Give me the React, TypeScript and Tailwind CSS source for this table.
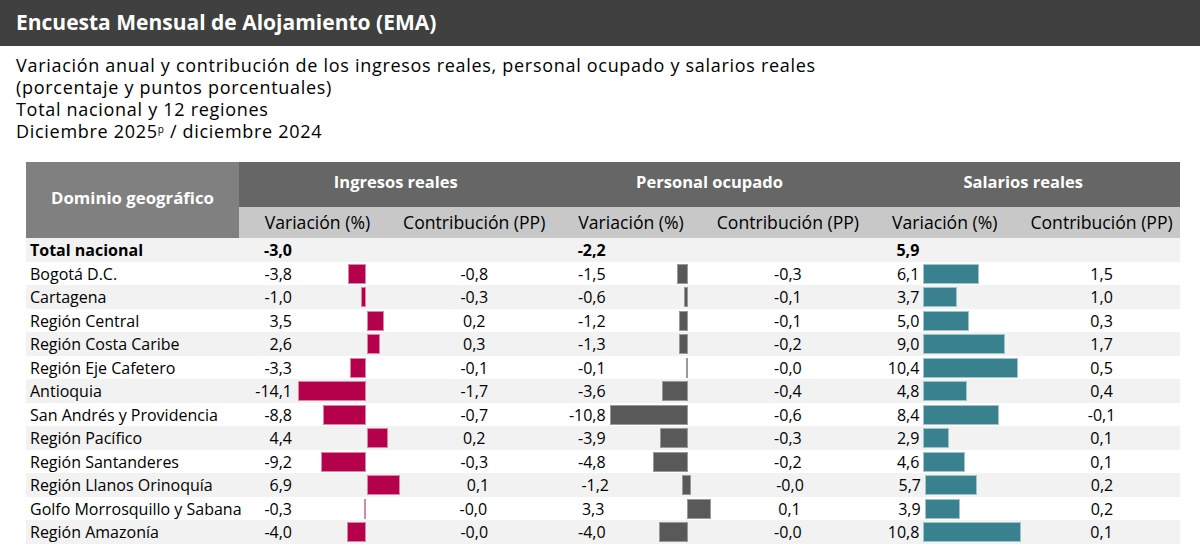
import React from 'react';

type Row = [string, string, string, string, string, string, string];

const rows: Row[] = [
  ['Bogotá D.C.', '-3,8', '-0,8', '-1,5', '-0,3', '6,1', '1,5'],
  ['Cartagena', '-1,0', '-0,3', '-0,6', '-0,1', '3,7', '1,0'],
  ['Región Central', '3,5', '0,2', '-1,2', '-0,1', '5,0', '0,3'],
  ['Región Costa Caribe', '2,6', '0,3', '-1,3', '-0,2', '9,0', '1,7'],
  ['Región Eje Cafetero', '-3,3', '-0,1', '-0,1', '-0,0', '10,4', '0,5'],
  ['Antioquia', '-14,1', '-1,7', '-3,6', '-0,4', '4,8', '0,4'],
  ['San Andrés y Providencia', '-8,8', '-0,7', '-10,8', '-0,6', '8,4', '-0,1'],
  ['Región Pacífico', '4,4', '0,2', '-3,9', '-0,3', '2,9', '0,1'],
  ['Región Santanderes', '-9,2', '-0,3', '-4,8', '-0,2', '4,6', '0,1'],
  ['Región Llanos Orinoquía', '6,9', '0,1', '-1,2', '-0,0', '5,7', '0,2'],
  ['Golfo Morrosquillo y Sabana', '-0,3', '-0,0', '3,3', '0,1', '3,9', '0,2'],
  ['Región Amazonía', '-4,0', '-0,0', '-4,0', '-0,0', '10,8', '0,1'],
];

const num = (s: string) => parseFloat(s.replace(',', '.'));

// one variation cell: number, then the bar split at the zero axis
function VarCell({
  value,
  scale,
  negWidth,
  barClass,
  bold,
  showBar = true,
}: {
  value: string;
  scale: number;
  negWidth: number;
  barClass: string;
  bold?: boolean;
  showBar?: boolean;
}) {
  const v = num(value);
  const w = Math.max(1, Math.round(Math.abs(v) * scale));
  return (
    <div className="flex items-center h-full">
      <span className={`w-[53px] shrink-0 text-right ${bold ? 'font-bold' : ''}`}>{value}</span>
      <div className="shrink-0 flex justify-end items-center h-full" style={{ width: negWidth }}>
        {showBar && v < 0 && <div className={`h-[20px] ${barClass}`} style={{ width: w }} />}
      </div>
      <div className="flex-1 flex items-center h-full pl-[1px]">
        {showBar && v >= 0 && <div className={`h-[20px] shrink-0 ${barClass}`} style={{ width: w }} />}
      </div>
    </div>
  );
}

const ING = 'bg-[#b5004b] border border-[#d986a8]';
const PER = 'bg-[#595959] border border-[#9a9a9a]';
const SAL = 'bg-[#3a818f] border border-[#9ec4cc]';

export default function App() {
  return (
    <div
      className="w-[1200px] h-[559px] bg-white text-black overflow-hidden"
      style={{ fontFamily: '"Open Sans", "Noto Sans", sans-serif' }}
    >
      <div className="h-[46px] bg-[#404040] flex items-center px-4 text-white font-bold text-[21px]">
        Encuesta Mensual de Alojamiento (EMA)
      </div>

      <div className="pt-[8px] pl-4 text-[18px] tracking-[0.7px] leading-[22px]">
        <div>Variación anual y contribución de los ingresos reales, personal ocupado y salarios reales</div>
        <div>(porcentaje y puntos porcentuales)</div>
        <div>Total nacional y 12 regiones</div>
        <div>
          Diciembre 2025<sup className="text-[10px] leading-none">p</sup> / diciembre 2024
        </div>
      </div>

      <div className="ml-[26px] mt-[20px] w-[1154px] text-[16px]">
        {/* cabecera */}
        <div className="grid grid-cols-[213px_repeat(6,1fr)] grid-rows-[45px_31px]">
          <div className="row-span-2 bg-[#808080] text-white font-bold text-[16.8px] flex items-center justify-center pb-[4px]">
            Dominio geográfico
          </div>
          <div className="col-span-2 bg-[#666666] text-white font-bold text-[16.5px] flex items-center justify-center pb-[4px]">
            Ingresos reales
          </div>
          <div className="col-span-2 bg-[#666666] text-white font-bold text-[16.5px] flex items-center justify-center pb-[4px]">
            Personal ocupado
          </div>
          <div className="col-span-2 bg-[#666666] text-white font-bold text-[16.5px] flex items-center justify-center pb-[4px]">
            Salarios reales
          </div>
          {['Variación (%)', 'Contribución (PP)', 'Variación (%)', 'Contribución (PP)', 'Variación (%)', 'Contribución (PP)'].map(
            (t, i) => (
              <div key={i} className="bg-[#c8c8c8] text-[17.6px] flex items-center justify-center">
                {t}
              </div>
            )
          )}
        </div>

        {/* total */}
        <div className="grid grid-cols-[213px_repeat(6,1fr)] h-[23.5px] bg-[#f2f2f2] font-bold items-center">
          <div className="pl-[4px]">Total nacional</div>
          <VarCell value="-3,0" scale={0} negWidth={74} barClass={ING} bold showBar={false} />
          <div />
          <VarCell value="-2,2" scale={0} negWidth={82} barClass={PER} bold showBar={false} />
          <div />
          <VarCell value="5,9" scale={0} negWidth={3} barClass={SAL} bold showBar={false} />
          <div />
        </div>

        {rows.map((r, i) => (
          <div
            key={r[0]}
            className={`grid grid-cols-[213px_repeat(6,1fr)] h-[23.5px] items-center ${
              i % 2 === 0 ? 'bg-white' : 'bg-[#f2f2f2]'
            }`}
          >
            <div className="pl-[4px] whitespace-nowrap">{r[0]}</div>
            <VarCell value={r[1]} scale={4.85} negWidth={74} barClass={ING} />
            <div className="text-center">{r[2]}</div>
            <VarCell value={r[3]} scale={7.2} negWidth={82} barClass={PER} />
            <div className="text-center">{r[4]}</div>
            <VarCell value={r[5]} scale={9.1} negWidth={3} barClass={SAL} />
            <div className="text-center">{r[6]}</div>
          </div>
        ))}
      </div>
    </div>
  );
}
